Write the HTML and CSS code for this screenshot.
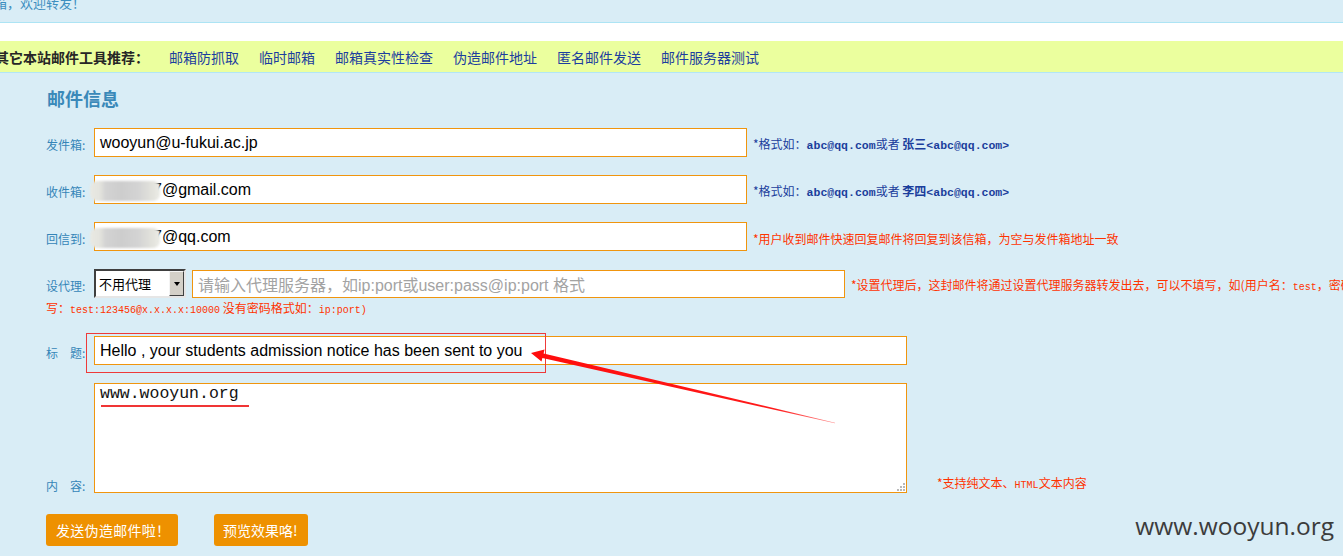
FILE: index.html
```html
<!DOCTYPE html>
<html lang="zh-CN">
<head>
<meta charset="utf-8">
<title>邮件信息</title>
<link rel="stylesheet" href="styles.css">
</head>
<body>
<div class="topnote"><span>箱，欢迎转发！</span></div>
<div class="band"></div>
<div class="toolbar">
  <b class="tb-label">其它本站邮件工具推荐：</b>
  <a class="tb-link" href="#">邮箱防抓取</a>
  <a class="tb-link" href="#">临时邮箱</a>
  <a class="tb-link" href="#">邮箱真实性检查</a>
  <a class="tb-link" href="#">伪造邮件地址</a>
  <a class="tb-link" href="#">匿名邮件发送</a>
  <a class="tb-link" href="#">邮件服务器测试</a>
</div>
<div class="main">
  <h2 class="heading">邮件信息</h2>

  <div class="row">
    <span class="lbl">发件箱:</span>
    <div class="field w653">wooyun@u-fukui.ac.jp</div>
    <span class="hint blue">*格式如：<b class="mono">abc@qq.com</b>或者 <b>张三</b><b class="mono">&lt;abc@qq.com&gt;</b></span>
  </div>

  <div class="row">
    <span class="lbl">收件箱:</span>
    <div class="field w653 masked"><span class="blur"></span>7@gmail.com</div>
    <span class="hint blue">*格式如：<b class="mono">abc@qq.com</b>或者 <b>李四</b><b class="mono">&lt;abc@qq.com&gt;</b></span>
  </div>

  <div class="row">
    <span class="lbl">回信到:</span>
    <div class="field w653 masked"><span class="blur"></span>7@qq.com</div>
    <span class="hint red">*用户收到邮件快速回复邮件将回复到该信箱，为空与发件箱地址一致</span>
  </div>

  <div class="row proxy">
    <span class="lbl">设代理:</span>
    <div class="select"><span class="sel-text">不用代理</span><span class="sel-btn"><span class="sel-arrow"></span></span></div>
    <div class="field w653 ph">请输入代理服务器，如ip:port或user:pass@ip:port 格式</div>
    <span class="hint red">*设置代理后，这封邮件将通过设置代理服务器转发出去，可以不填写，如(用户名：<span class="mono">test</span>，密码：<span class="mono">123456</span>，则填</span>
  </div>
  <div class="cont red">写：<span class="mono">test:123456@x.x.x.x:10000</span> 没有密码格式如：<span class="mono">ip:port)</span></div>

  <div class="row">
    <span class="lbl">标　题:</span>
    <div class="field w813">Hello , your students admission notice has been sent to you</div>
  </div>

  <div class="row bottom">
    <span class="lbl">内　容:</span>
    <div class="area">www.wooyun.org<svg class="grip" width="9" height="9" viewBox="0 0 9 9"><g fill="#b8b8b8"><rect x="7" y="1" width="2" height="2"/><rect x="4" y="4" width="2" height="2"/><rect x="7" y="4" width="2" height="2"/><rect x="1" y="7" width="2" height="2"/><rect x="4" y="7" width="2" height="2"/><rect x="7" y="7" width="2" height="2"/></g></svg></div>
    <span class="hint red area-hint">*支持纯文本、<span class="mono">HTML</span>文本内容</span>
  </div>

  <div class="actions">
    <button class="btn btn-send" type="button">发送伪造邮件啦！</button>
    <button class="btn btn-preview" type="button">预览效果咯!</button>
  </div>
</div>

<svg class="annot" width="1343" height="556" viewBox="0 0 1343 556">
  <defs>
    <linearGradient id="fade" x1="531" y1="353" x2="835" y2="423" gradientUnits="userSpaceOnUse">
      <stop offset="0" stop-color="#ff0c0c"/>
      <stop offset="0.8" stop-color="#ff1a1a"/>
      <stop offset="1" stop-color="#ff8a8a"/>
    </linearGradient>
  </defs>
  <rect x="86.5" y="333.5" width="459" height="39" fill="none" stroke="#ee3a3a" stroke-width="1"/>
  <rect x="101" y="405" width="148" height="2" fill="#f03535"/>
  <polygon fill="url(#fade)" points="531,353 544.5,349.5 543.6,353.4 835,422.7 835,423.3 542.4,358 541.5,361.5"/>
</svg>
<div class="watermark">www.wooyun.org</div>
</body>
</html>
```

FILE: styles.css
```css
html, body {
  margin: 0;
  overflow: hidden;
}
body {
  position: relative;
  width: 1343px;
  height: 556px;
  background: #d9edf6;
  font-family: "Noto Sans CJK SC", sans-serif;
}

.topnote {
  height: 22px;
  overflow: hidden;
  border-bottom: 1px solid #ade4f4;
  font-size: 13px;
  color: #3d8fc0;
}
.topnote span {
  display: block;
  margin: -4px 0 0 -6px;
  line-height: 14px;
}
.band {
  height: 18px;
  background: #ffffff;
}
.toolbar {
  height: 31px;
  background: #ebff9e;
  border-bottom: 1px solid #b2e6f5;
  display: flex;
  align-items: center;
  gap: 20px;
  font-size: 14px;
  line-height: 16px;
  white-space: nowrap;
}
.tb-label {
  margin-left: -5px;
  font-weight: bold;
  color: #262626;
}
.tb-link {
  color: #1c3e9f;
  text-decoration: none;
}

.main {
  padding: 13px 0 0 46px;
}
.heading {
  margin: 0 0 18px 1px;
  font-size: 18px;
  line-height: 24px;
  font-weight: bold;
  color: #3a89b9;
}

.row {
  display: flex;
  align-items: center;
  margin-bottom: 18px;
}
.row.proxy {
  margin-bottom: 0;
}
.row.bottom {
  align-items: flex-end;
  margin-bottom: 21px;
}
.lbl {
  flex: none;
  width: 48px;
  margin-top: 5px;
  font-size: 12px;
  line-height: 14px;
  color: #3585b8;
  white-space: nowrap;
}
.row.bottom .lbl {
  margin-top: 0;
}

.field {
  box-sizing: border-box;
  flex: none;
  position: relative;
  height: 29px;
  padding: 0 5px;
  display: flex;
  align-items: center;
  background: #ffffff;
  border: 1px solid #f0950e;
  font-family: "Liberation Sans", Arial, sans-serif;
  font-size: 16px;
  color: #000000;
  white-space: nowrap;
}
.w653 { width: 653px; }
.w813 { width: 813px; }
.field.masked {
  padding-left: 58px;
}
.field.ph {
  height: 28px;
  margin-left: 6px;
  color: #a3a3a3;
  font-family: "Liberation Sans", "Noto Sans CJK SC", sans-serif;
}
.blur {
  position: absolute;
  left: -5px;
  top: 5px;
  width: 70px;
  height: 20px;
  border-radius: 7px;
  background: linear-gradient(90deg, #e9e9e3 0%, #e4e4de 14%, #d3d3d3 22%, #cdcdcd 45%, #d4d4d4 70%, #e2e2dc 88%, #ecece6 100%);
  filter: blur(1px);
}

.hint {
  margin-left: 6px;
  margin-top: 5px;
  font-size: 12px;
  line-height: 14px;
  white-space: nowrap;
}
.blue { color: #1b3e9c; }
.red { color: #ff3300; }
.mono {
  font-family: "Liberation Mono", monospace;
  font-size: 10px;
}
.blue .mono {
  font-size: 11.5px;
  font-weight: bold;
}
.area-hint {
  margin-left: 30px;
  margin-top: 0;
}

.select {
  box-sizing: border-box;
  flex: none;
  width: 92px;
  height: 29px;
  display: flex;
  background: #ffffff;
  border: 2px solid;
  border-color: #3f3f3f #e6e6e6 #e6e6e6 #3f3f3f;
}
.sel-text {
  flex: 1;
  display: flex;
  align-items: center;
  padding-left: 3px;
  font-size: 13px;
  color: #000000;
}
.sel-btn {
  box-sizing: border-box;
  width: 15px;
  display: flex;
  align-items: center;
  justify-content: center;
  background: #d4d0c8;
  border: 1px solid;
  border-color: #f4f4f4 #404040 #404040 #f4f4f4;
}
.sel-arrow {
  width: 0;
  height: 0;
  border-left: 3.5px solid transparent;
  border-right: 3.5px solid transparent;
  border-top: 4px solid #000000;
}

.cont {
  margin: 3px 0 18px 0;
  font-size: 12px;
  line-height: 14px;
  white-space: nowrap;
}

.area {
  box-sizing: border-box;
  flex: none;
  position: relative;
  width: 813px;
  height: 110px;
  padding: 0 5px;
  background: #ffffff;
  border: 1px solid #f0950e;
  font-family: "Liberation Mono", monospace;
  font-size: 16.5px;
  line-height: 20px;
  color: #111111;
}
.grip {
  position: absolute;
  right: 1px;
  bottom: 1px;
}

.actions {
  display: flex;
  gap: 36px;
}
.btn {
  box-sizing: border-box;
  height: 32px;
  padding: 0 0 0 10px;
  border: none;
  border-radius: 3px;
  background: #ee9100;
  color: #ffffff;
  font-family: "Noto Sans CJK SC", sans-serif;
  font-size: 14px;
  line-height: 16px;
  text-align: left;
  white-space: nowrap;
}
.btn-send {
  width: 132px;
  letter-spacing: 0.3px;
}
.btn-preview {
  width: 94px;
  padding-left: 9px;
}

.annot {
  position: absolute;
  left: 0;
  top: 0;
  pointer-events: none;
}
.watermark {
  position: absolute;
  right: 9px;
  top: 511px;
  font-family: "Open Sans", sans-serif;
  font-size: 24.5px;
  line-height: 30px;
  color: #3c3c3c;
}
```
